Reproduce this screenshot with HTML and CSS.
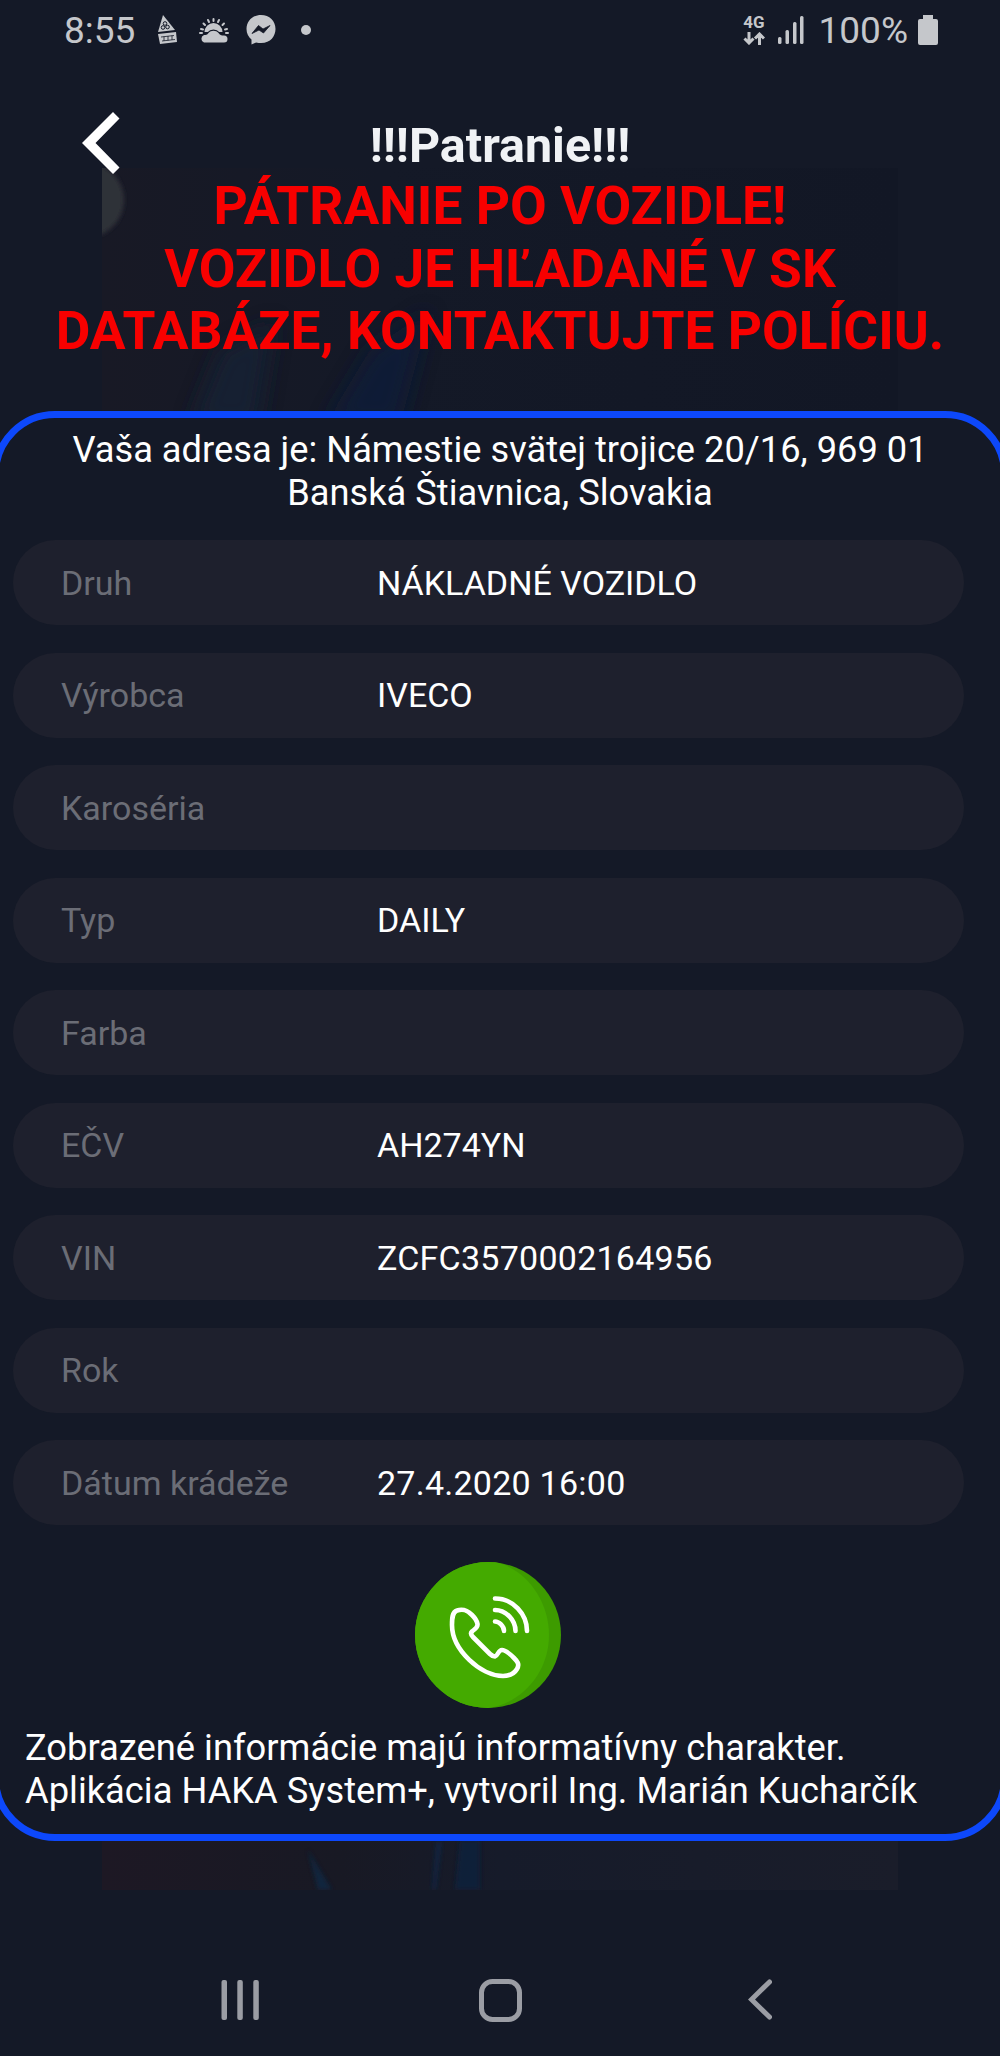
FILE: index.html
```html
<!DOCTYPE html>
<html lang="sk">
<head>
<meta charset="utf-8">
<title>Patranie</title>
<link rel="stylesheet" href="styles.css">
</head>
<body>
<div class="screen">
  <svg class="backdrop" width="1000" height="2056" viewBox="0 0 1000 2056" aria-hidden="true">
    <defs>
      <filter id="soft" x="-30%" y="-30%" width="160%" height="160%"><feGaussianBlur stdDeviation="10"/></filter>
      <filter id="edge" x="-30%" y="-30%" width="160%" height="160%"><feGaussianBlur stdDeviation="2"/></filter>
      <linearGradient id="wash" x1="0" x2="1"><stop offset="0" stop-color="#181925"/><stop offset=".35" stop-color="#141927"/><stop offset="1" stop-color="#121725"/></linearGradient>
      <linearGradient id="floor" x1="0" x2="1"><stop offset="0" stop-color="#1d1824"/><stop offset=".3" stop-color="#181924"/><stop offset=".5" stop-color="#161b2a"/><stop offset="1" stop-color="#1a1d2a"/></linearGradient>
      <clipPath id="photo"><rect x="102" y="168" width="796" height="1722"/></clipPath>
    </defs>
    <rect x="102" y="168" width="796" height="250" fill="url(#wash)"/>
    <rect x="102" y="1835" width="796" height="55" fill="url(#floor)"/>
    <g clip-path="url(#photo)">
      <circle cx="86" cy="200" r="38" fill="#2e3039" filter="url(#edge)"/>
      <path d="M190 425L220 350L275 320L258 425Z" fill="#132334" filter="url(#soft)" opacity=".8"/>
      <path d="M325 425L370 350L430 310L400 425Z" fill="#101f3b" filter="url(#soft)" opacity=".75"/>
      <path d="M308 1850L332 1890L318 1890Z" fill="#102a48" filter="url(#edge)" opacity=".7"/>
      <path d="M436 1842H442L436 1890H432Z" fill="#10284a" filter="url(#edge)" opacity=".7"/>
      <path d="M460 1840H480V1890H455Z" fill="#11233c" filter="url(#edge)" opacity=".8"/>
    </g>
  </svg>

  <header class="status">
    <div class="status-left">
      <span class="clock">8:55</span>
      <svg class="ic-warn" width="20" height="30" viewBox="0 0 20 30">
        <path d="M6 0L18 15L1 17Z" fill="#c5c7cb"/>
        <path d="M1 19L19 17L20 27L3 29Z" fill="#c5c7cb"/>
        <g fill="none" stroke="#141927" stroke-width="1"><circle cx="8" cy="8.500" r="1.800"/><circle cx="6" cy="12.500" r="1.800"/><circle cx="10.500" cy="12" r="1.800"/><path d="M4 22L17 20.500M5 26L18 24.500M7 21.500V26M11 21V25.500M15 20.500V25" stroke-width=".8"/></g>
      </svg>
      <svg class="ic-weather" width="30" height="25" viewBox="0 0 30 25">
        <g stroke="#c5c7cb" stroke-width="2" stroke-linecap="round"><path d="M14.500 1V3M9 2L10 4M20 2L19 4M4.500 5.500L6 7M25 5.500L23.500 7M2 11L4 11.500M28 11L26 11.500M1 15H3M29 15H27"/></g>
        <path d="M5.500 14A9 9 0 0 1 23.500 14" fill="#c5c7cb"/>
        <path d="M5 24.500A4 4 0 0 1 5 17C7 17 8 17 9.500 15C12 12 17 12 19.500 15C21 17 22 17.500 25 17.500A3.500 3.500 0 0 1 25 24.500Z" fill="#c5c7cb" stroke="#141927" stroke-width="2.600" paint-order="stroke"/>
      </svg>
      <svg class="ic-chat" width="30" height="30" viewBox="0 0 30 30">
        <path d="M15 0C6.500 0 0.500 6 0.500 14C0.500 18.500 2.500 22 5.500 24.500V29.500L10 27.500C23 30.500 29.500 22 29.500 14C29.500 6 23.500 0 15 0Z" fill="#c5c7cb"/>
        <path d="M6 18.500L12.500 10.500L17 14L24 10.500L17.500 18L13 15Z" fill="#141927" stroke="#141927" stroke-width=".8" stroke-linejoin="round"/>
      </svg>
      <span class="dot"></span>
    </div>
    <div class="status-right">
      <div class="net"><span>4G</span>
        <svg width="22" height="13" viewBox="0 0 22 13" fill="none" stroke="#c5c7cb" stroke-width="3"><path d="M6 0V11M1.500 6.500L6 11L10.500 6.500M16.500 13V2M12 6.500L16.500 2L21 6.500"/></svg>
      </div>
      <svg class="signal" width="26" height="28" viewBox="0 0 26 28" fill="#c5c7cb"><rect x="0" y="21" width="3.500" height="7" rx="1.500"/><rect x="7.500" y="14" width="3.500" height="14" rx="1.500"/><rect x="15" y="6" width="3.500" height="22" rx="1.500"/><rect x="22" y="0" width="3.500" height="28" rx="1.500"/></svg>
      <span class="percent">100%</span>
      <svg width="20" height="30" viewBox="0 0 20 30"><path d="M5 0H15V4H18A2 2 0 0 1 20 6V28A2 2 0 0 1 18 30H2A2 2 0 0 1 0 28V6A2 2 0 0 1 2 4H5Z" fill="#c5c7cb"/></svg>
    </div>
  </header>

  <div class="titlebar">
    <svg class="back" width="38" height="62" viewBox="0 0 38 62"><path d="M31 0L37.500 6.500L13.500 31L37.500 55.500L31 62L0 31Z" fill="#fff"/></svg>
    <h1 class="title">!!!Patranie!!!</h1>
  </div>
  <p class="alert">PÁTRANIE PO VOZIDLE!<br>VOZIDLO JE HĽADANÉ V SK<br>DATABÁZE, KONTAKTUJTE POLÍCIU.</p>

  <main class="panel">
    <p class="address">Vaša adresa je: Námestie svätej trojice 20/16, 969 01<br>Banská Štiavnica, Slovakia</p>
    <dl class="fields">
      <div class="field"><dt>Druh</dt><dd>NÁKLADNÉ VOZIDLO</dd></div>
      <div class="field"><dt>Výrobca</dt><dd>IVECO</dd></div>
      <div class="field"><dt>Karoséria</dt><dd></dd></div>
      <div class="field"><dt>Typ</dt><dd>DAILY</dd></div>
      <div class="field"><dt>Farba</dt><dd></dd></div>
      <div class="field"><dt>EČV</dt><dd>AH274YN</dd></div>
      <div class="field"><dt>VIN</dt><dd class="numeric">ZCFC3570002164956</dd></div>
      <div class="field"><dt>Rok</dt><dd></dd></div>
      <div class="field"><dt>Dátum krádeže</dt><dd class="numeric">27.4.2020 16:00</dd></div>
    </dl>
    <svg class="call" width="146" height="146" viewBox="0 0 146 146">
      <circle cx="73" cy="73" r="73" fill="#3d9b00"/>
      <path d="M73 0A73 73 0 0 0 73 146C105 142 134 112 134 73C134 36 108 5 80 0.300Z" fill="#44aa00"/>
      <g fill="none" stroke="#fff" stroke-width="4.600" stroke-linecap="round" stroke-linejoin="round">
        <path d="M42 48.500C37 50 37 57 37 63C37 88 66 114 88 114C95 114 99 112 102 107C105 102 102 99 99 96C95 92 90 88 87 88C83 88 83 94 80 94.500C78 94.500 77 94 75 92L58 75C56 73 55.500 71 57 69.500C59 67.500 63 66 62.500 62C62 59 60 56 57 53C52 48 48 46.500 42 48.500Z"/>
        <path d="M80 36.500C98 36.500 112 52 112 69M80 48C91 48 100.500 58 100.500 69M80 59.500C84 59.500 89 64 89 69"/>
      </g>
    </svg>
    <p class="note">Zobrazené informácie majú informatívny charakter.<br>Aplikácia HAKA System+, vytvoril Ing. Marián Kucharčík</p>
  </main>

  <nav class="navbar">
    <svg width="38" height="42" viewBox="0 0 38 42" fill="#9b9da4"><rect x="0.500" y="1" width="5.500" height="40" rx="2"/><rect x="16.300" y="1" width="5.500" height="40" rx="2"/><rect x="32.300" y="1" width="5.500" height="40" rx="2"/></svg>
    <svg class="home" width="43" height="43" viewBox="0 0 43 43"><rect x="2.500" y="2.500" width="38" height="38" rx="11" fill="none" stroke="#9b9da4" stroke-width="5"/></svg>
    <svg width="24" height="42" viewBox="0 0 24 42"><path d="M21.500 3L3.500 20.500L21.500 38" fill="none" stroke="#9b9da4" stroke-width="5" stroke-linecap="round"/></svg>
  </nav>
</div>
</body>
</html>
```
FILE: styles.css
```css
* { box-sizing: border-box; }
body {
  margin: 0;
  background: #141927;
  color: #fff;
  font-family: Roboto, "Liberation Sans", sans-serif;
}
.screen {
  position: relative;
  display: flex;
  flex-direction: column;
  width: 1000px;
  height: 2056px;
  overflow: hidden;
}
.screen > * { position: relative; flex-shrink: 0; }
.screen > .backdrop { position: absolute; left: 0; top: 0; }
h1, p, dl, dd { margin: 0; }

.status {
  display: flex;
  justify-content: space-between;
  height: 60px;
  padding: 0 62px 0 64px;
  color: #c5c7cb;
  font-size: 37px;
  line-height: 62px;
}
.status-left, .status-right { display: flex; align-items: center; height: 60px; }
.clock, .percent { padding-top: 2px; }
.ic-warn { margin-left: 22px; }
.ic-weather { margin-left: 22px; }
.ic-chat { margin-left: 17px; }
.dot { width: 10px; height: 10px; margin-left: 25px; border-radius: 50%; background: #c5c7cb; }
.net { display: flex; flex-direction: column; align-items: center; width: 23px; font-size: 17px; font-weight: 700; line-height: 15px; gap: 2px; }
.signal { margin-left: 12px; }
.percent { margin: 0 10px 0 15px; }

.titlebar {
  display: flex;
  justify-content: center;
  height: 115px;
  padding-top: 53px;
}
.back { position: absolute; left: 82px; top: 52px; }
.title { font-size: 48.400px; line-height: 66px; font-weight: 700; color: #f0f2f5; }
.alert {
  height: 236px;
  color: #f80000;
  font-size: 53.300px;
  font-weight: 700;
  line-height: 62.500px;
  text-align: center;
  white-space: nowrap;
}

.panel {
  display: flex;
  flex-direction: column;
  width: 1016px;
  height: 1430px;
  margin-left: -8px;
  border: 7px solid #0d48fb;
  border-radius: 63px;
  background: #141927;
  white-space: nowrap;
}
.address {
  height: 122px;
  padding-top: 10px;
  font-size: 36.250px;
  line-height: 43px;
  text-align: center;
}
.fields { display: grid; grid-auto-rows: 85px; gap: 27.500px; width: 951px; margin-left: 14px; }
.field {
  display: grid;
  grid-template-columns: 316px 1fr;
  align-items: center;
  padding-left: 48px;
  border-radius: 43px;
  background: #1e202d;
  font-size: 34px;
  line-height: 40px;
}
.field dt { color: #6b6d76; }
.numeric { letter-spacing: .25px; }
.call { margin: 37px 0 0 416px; }
.note { padding: 18px 0 0 26px; font-size: 36.300px; line-height: 43px; }

.navbar {
  display: flex;
  align-items: center;
  height: 120px;
  margin-top: 99px;
  padding-left: 221px;
}
.home { margin: 0 226px 0 219.500px; }
```
